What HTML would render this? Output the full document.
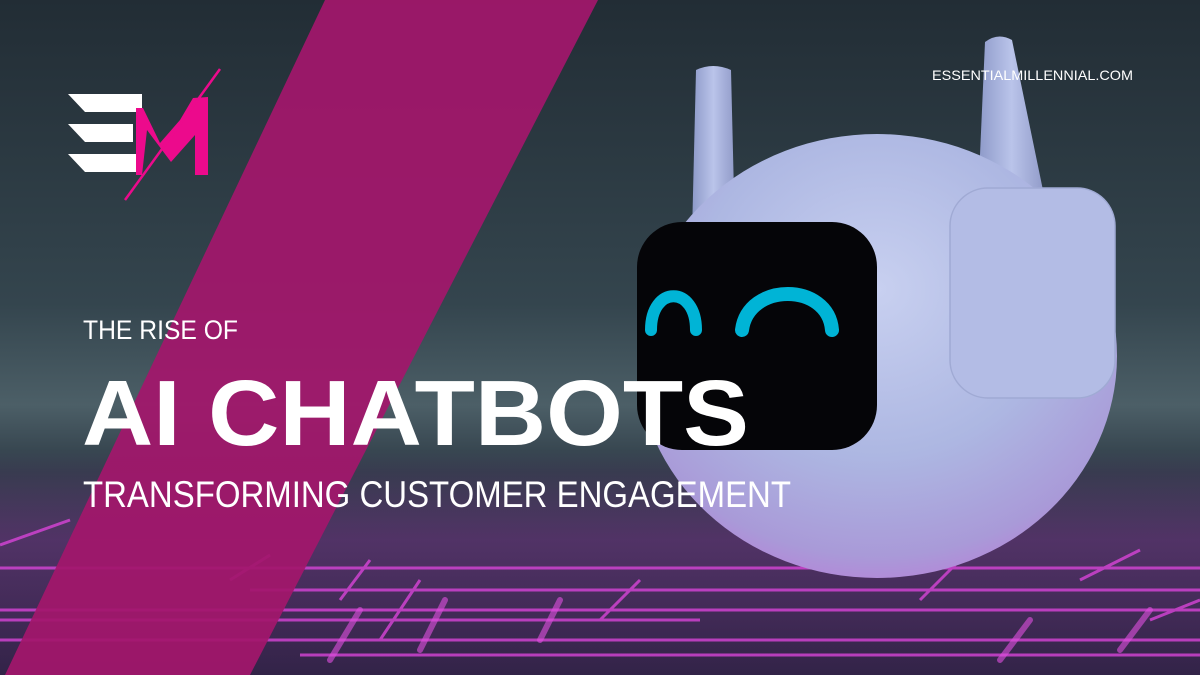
<!DOCTYPE html>
<html><head><meta charset="utf-8"><style>
html,body{margin:0;padding:0;width:1200px;height:675px;overflow:hidden;background:#26323b}
svg{display:block}
</style></head><body>
<svg width="1200" height="675" viewBox="0 0 1200 675" xmlns="http://www.w3.org/2000/svg">
<defs>
<linearGradient id="bg" x1="0" y1="0" x2="0" y2="1">
<stop offset="0" stop-color="#222d35"/>
<stop offset="0.45" stop-color="#34454e"/>
<stop offset="0.6" stop-color="#4c5f67"/>
<stop offset="0.7" stop-color="#2e3b46"/>
<stop offset="1" stop-color="#1d2532"/>
</linearGradient>
<radialGradient id="sph" cx="0.5" cy="0.35" r="0.75">
<stop offset="0" stop-color="#c8d0f0"/>
<stop offset="0.5" stop-color="#adb7e2"/>
<stop offset="0.8" stop-color="#a99ad8"/>
<stop offset="1" stop-color="#c070d8"/>
</radialGradient>
<linearGradient id="ant" x1="0" y1="0" x2="1" y2="0">
<stop offset="0" stop-color="#8d99c8"/><stop offset="0.5" stop-color="#bac4ea"/><stop offset="1" stop-color="#909ac8"/>
</linearGradient>
<linearGradient id="glow" x1="0" y1="0" x2="0" y2="1">
<stop offset="0" stop-color="#c040d0" stop-opacity="0"/>
<stop offset="0.4" stop-color="#b030c0" stop-opacity="0.3"/>
<stop offset="1" stop-color="#5a2070" stop-opacity="0.35"/>
</linearGradient>
</defs>
<rect width="1200" height="675" fill="url(#bg)"/>
<rect y="450" width="1200" height="225" fill="url(#glow)"/>
<g stroke="#d844d8" stroke-width="3" opacity="0.8">
<line x1="0" y1="610" x2="1200" y2="610"/>
<line x1="0" y1="620" x2="700" y2="620"/>
<line x1="250" y1="590" x2="1200" y2="590"/>
<line x1="0" y1="640" x2="1200" y2="640"/>
<line x1="300" y1="655" x2="1200" y2="655"/>
<line x1="0" y1="568" x2="1200" y2="568"/>
<line x1="0" y1="545" x2="70" y2="520"/>
<line x1="340" y1="600" x2="370" y2="560"/>
<line x1="380" y1="640" x2="420" y2="580"/>
<line x1="600" y1="620" x2="640" y2="580"/>
<line x1="920" y1="600" x2="960" y2="560"/>
<line x1="1080" y1="580" x2="1140" y2="550"/>
<line x1="1150" y1="620" x2="1200" y2="600"/>
<line x1="230" y1="580" x2="270" y2="555"/>
</g>
<g stroke="#e050e0" stroke-width="6" stroke-linecap="round" opacity="0.6">
<line x1="330" y1="660" x2="360" y2="610"/>
<line x1="420" y1="650" x2="445" y2="600"/>
<line x1="540" y1="640" x2="560" y2="600"/>
<line x1="1000" y1="660" x2="1030" y2="620"/>
<line x1="1120" y1="650" x2="1150" y2="610"/>
</g>
<polygon points="325,0 598,0 250,675 5,675" fill="#a3176c" opacity="0.93"/>
<!-- robot -->
<path d="M692,235 L696,70 Q713,62 731,70 L735,235 Z" fill="url(#ant)"/>
<path d="M978,200 L985,42 Q998,32 1012,40 L1045,200 Z" fill="url(#ant)"/>
<ellipse cx="877" cy="356" rx="240" ry="222" fill="url(#sph)"/>
<rect x="950" y="188" width="165" height="210" rx="38" fill="#b3bce5" stroke="#a0aad4" stroke-width="1.5"/>
<rect x="637" y="222" width="240" height="228" rx="45" fill="#050508"/>
<path d="M651,330 C651,285 696,285 696,330" fill="none" stroke="#00b4d6" stroke-width="12" stroke-linecap="round"/>
<path d="M742,330 C748,282 828,282 832,330" fill="none" stroke="#00b4d6" stroke-width="14" stroke-linecap="round"/>
<!-- logo -->
<polygon points="68,94 142,94 142,112 85,112" fill="#fff"/>
<polygon points="68,124 133,124 133,142 85,142" fill="#fff"/>
<polygon points="68,154 142,154 142,172 85,172" fill="#fff"/>
<polygon points="136,108 143,108 160,143 180,120 193,98 208,97 208,175 195,175 195,135 171,162 162,150 147,130 142,175 136,175" fill="#ec0a8c"/>
<line x1="220" y1="69" x2="125" y2="200" stroke="#ec0a8c" stroke-width="2.5"/>
<!-- text -->
<text x="932" y="80" fill="#fff" font-family="Liberation Sans, sans-serif" font-size="14" textLength="201" lengthAdjust="spacingAndGlyphs">ESSENTIALMILLENNIAL.COM</text>
<text x="83" y="339" fill="#fff" font-family="Liberation Sans, sans-serif" font-size="27" textLength="155" lengthAdjust="spacingAndGlyphs">THE RISE OF</text>
<text x="82" y="445" fill="#fff" font-family="Liberation Sans, sans-serif" font-weight="bold" font-size="93" textLength="667" lengthAdjust="spacingAndGlyphs">AI CHATBOTS</text>
<text x="83" y="507" fill="#fff" font-family="Liberation Sans, sans-serif" font-size="37" textLength="708" lengthAdjust="spacingAndGlyphs">TRANSFORMING CUSTOMER ENGAGEMENT</text>
</svg>
</body></html>
